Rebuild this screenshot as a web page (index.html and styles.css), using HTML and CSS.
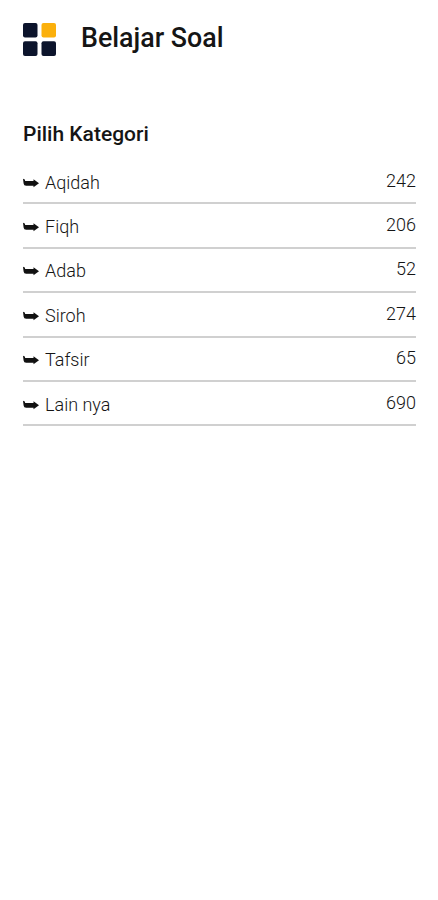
FILE: index.html
```html
<!DOCTYPE html>
<html lang="id">
  <head>
    <meta charset="UTF-8" />
    <meta name="viewport" content="width=device-width, initial-scale=1.0" />
    <title>Belajar Soal</title>
    <link rel="stylesheet" href="styles.css">
  </head>
  <body>
    <svg width="0" height="0" class="sprite">
      <symbol id="arrow" viewBox="0 0 16 10">
        <path d="M0 .8 1.8 1.6 2.2 3H10.5V1.2L16 5.2 10.5 9.2V7.8H3.2Q.8 7.8.6 5.5Z" />
      </symbol>
    </svg>

    <header>
      <svg class="logo" viewBox="0 0 33 33">
        <rect x="0" y="0" width="14.5" height="14.5" rx="2" />
        <rect class="accent" x="18.5" y="0" width="14.5" height="14.5" rx="2" />
        <rect x="0" y="18.2" width="14.5" height="14.8" rx="2" />
        <rect x="18.5" y="18.2" width="14.5" height="14.8" rx="2" />
      </svg>
      <h1>Belajar Soal</h1>
    </header>

    <main>
      <h2>Pilih Kategori</h2>
      <ul class="category-list">
        <li><span class="name"><svg class="arrow"><use href="#arrow" /></svg>Aqidah</span><span class="count">242</span></li>
        <li><span class="name"><svg class="arrow"><use href="#arrow" /></svg>Fiqh</span><span class="count">206</span></li>
        <li><span class="name"><svg class="arrow"><use href="#arrow" /></svg>Adab</span><span class="count">52</span></li>
        <li><span class="name"><svg class="arrow"><use href="#arrow" /></svg>Siroh</span><span class="count">274</span></li>
        <li><span class="name"><svg class="arrow"><use href="#arrow" /></svg>Tafsir</span><span class="count">65</span></li>
        <li><span class="name"><svg class="arrow"><use href="#arrow" /></svg>Lain nya</span><span class="count">690</span></li>
      </ul>
    </main>
  </body>
</html>
```
FILE: styles.css
```css
* {
  margin: 0;
  padding: 0;
  box-sizing: border-box;
}

body {
  background-color: #fff;
  color: #151515;
  font-family: Roboto, sans-serif;
}

.sprite {
  display: block;
}

header {
  display: flex;
  align-items: flex-start;
  padding: 23px 23px 0;
  height: 122px;
}

.logo {
  width: 33px;
  height: 33px;
  fill: #0c142c;
}

.logo .accent {
  fill: #fbb00c;
}

h1 {
  margin-left: 25px;
  font-size: 26.8px;
  line-height: 30px;
  font-weight: 500;
}

main {
  padding: 0 22px 0 23px;
}

h2 {
  font-size: 21px;
  line-height: 24px;
  font-weight: 500;
}

.category-list {
  margin-top: 14px;
  list-style: none;
}

.category-list li {
  display: flex;
  justify-content: space-between;
  height: 44.4px;
  padding-top: 9.6px;
  border-bottom: 2px solid #d0d0d0;
  font-size: 18px;
  line-height: 22px;
  font-weight: 300;
}

.name {
  display: flex;
  padding-top: 2px;
}

.arrow {
  width: 16px;
  height: 10px;
  margin: 6px 6px 0 0;
  fill: #111;
}
```
